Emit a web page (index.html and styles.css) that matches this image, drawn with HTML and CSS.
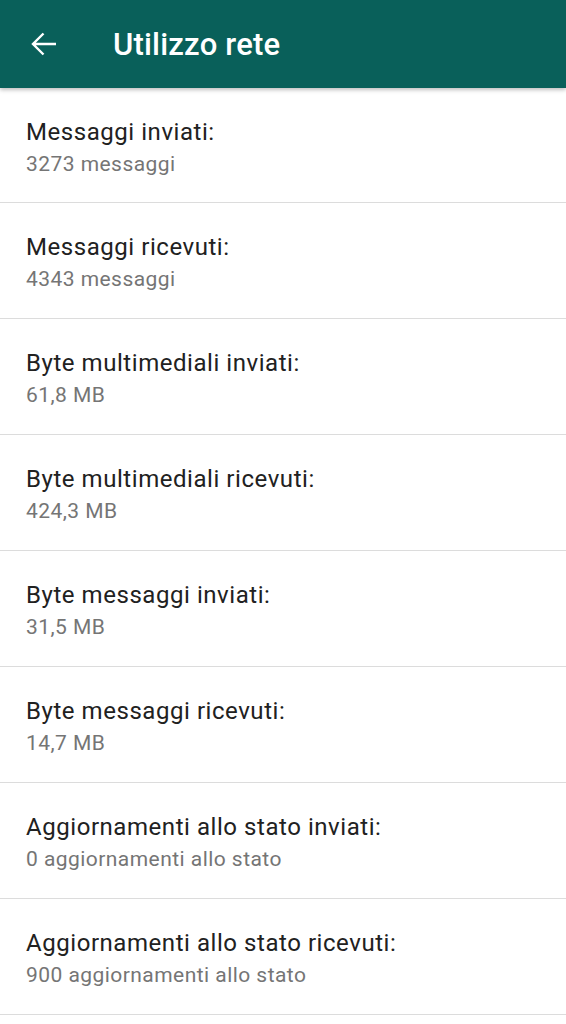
FILE: index.html
```html
<!DOCTYPE html>
<html lang="it">
<head>
    <meta charset="UTF-8">
    <meta name="viewport" content="width=device-width, initial-scale=1.0">
    <title>Utilizzo rete</title>
    <link rel="stylesheet" href="styles.css">
</head>
<body>
    <header class="toolbar">
        <svg class="back-icon" viewBox="0 0 26 24" width="26" height="24">
            <path d="M25 12H2M12.5 1.5L2 12l10.5 10.5" fill="none" stroke="#fff" stroke-width="2.4"/>
        </svg>
        <h1 class="toolbar-title">Utilizzo rete</h1>
    </header>

    <ul class="stat-list">
        <li class="stat-row">
            <div class="stat-title">Messaggi inviati:</div>
            <div class="stat-value">3273 messaggi</div>
        </li>
        <li class="stat-row">
            <div class="stat-title">Messaggi ricevuti:</div>
            <div class="stat-value">4343 messaggi</div>
        </li>
        <li class="stat-row">
            <div class="stat-title">Byte multimediali inviati:</div>
            <div class="stat-value">61,8 MB</div>
        </li>
        <li class="stat-row">
            <div class="stat-title">Byte multimediali ricevuti:</div>
            <div class="stat-value">424,3 MB</div>
        </li>
        <li class="stat-row">
            <div class="stat-title">Byte messaggi inviati:</div>
            <div class="stat-value">31,5 MB</div>
        </li>
        <li class="stat-row">
            <div class="stat-title">Byte messaggi ricevuti:</div>
            <div class="stat-value">14,7 MB</div>
        </li>
        <li class="stat-row">
            <div class="stat-title">Aggiornamenti allo stato inviati:</div>
            <div class="stat-value">0 aggiornamenti allo stato</div>
        </li>
        <li class="stat-row">
            <div class="stat-title">Aggiornamenti allo stato ricevuti:</div>
            <div class="stat-value">900 aggiornamenti allo stato</div>
        </li>
    </ul>
</body>
</html>
```

FILE: styles.css
```css
body {
    margin: 0;
    font-family: Roboto, "Noto Sans", sans-serif;
    background-color: #fff;
}
.toolbar {
    display: flex;
    align-items: center;
    height: 88px;
    background-color: #09605a;
    box-shadow: 0 2px 4px rgba(0, 0, 0, 0.25);
    position: relative;
}
.back-icon {
    margin-left: 31px;
}
.toolbar-title {
    margin: 0 0 0 56px;
    font-size: 31px;
    font-weight: 500;
    letter-spacing: 0.2px;
    color: #fff;
}
.stat-list {
    list-style: none;
    margin: 0;
    padding: 0;
}
.stat-row {
    height: 116px;
    box-sizing: border-box;
    padding: 30px 26px 0;
    border-bottom: 1px solid #dcdcdc;
}
.stat-row:first-child {
    height: 115px;
}
.stat-title {
    font-size: 24px;
    letter-spacing: 0.55px;
    color: #212121;
}
.stat-value {
    font-size: 21px;
    letter-spacing: 0.45px;
    color: #757575;
    margin-top: 6px;
}
```
